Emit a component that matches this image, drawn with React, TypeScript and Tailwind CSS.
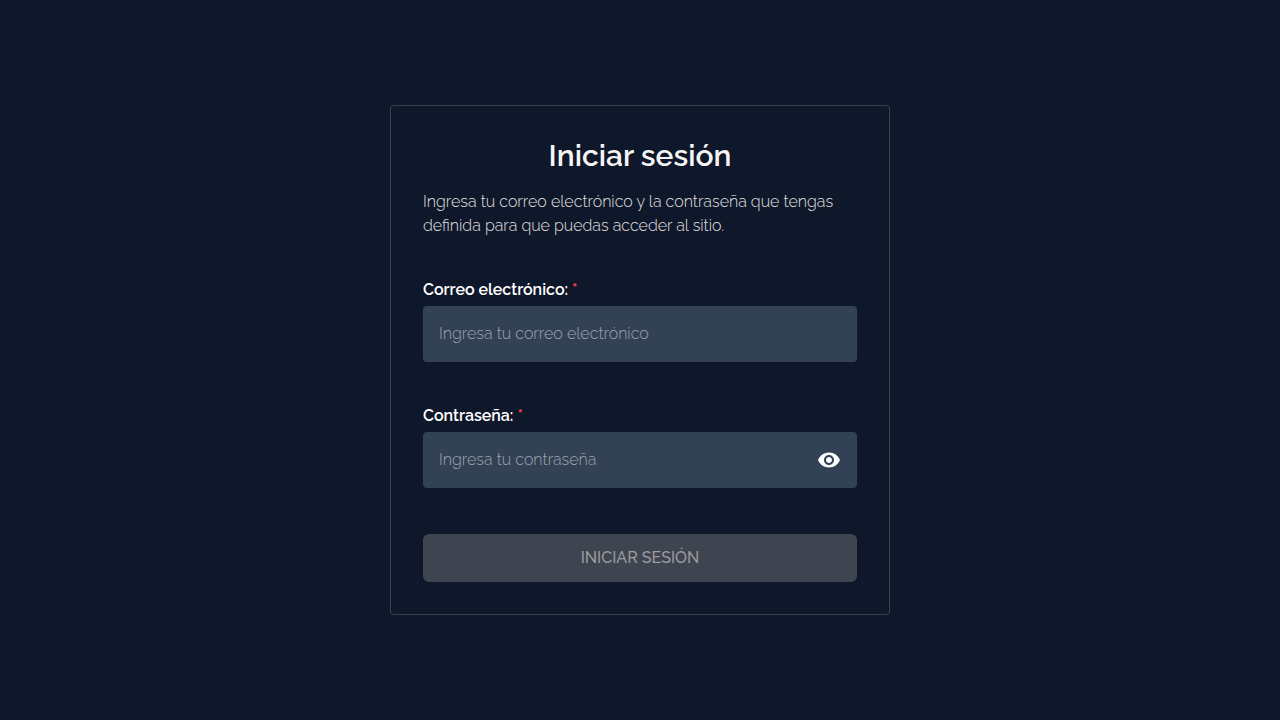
import { useState } from "react";
import { MdVisibility } from "react-icons/md";

const fieldClass =
  "block h-14 w-full rounded bg-[#334155] px-4 pb-0.5 text-base font-light text-white outline-none placeholder:text-[#9ca3af]";

function Label({ htmlFor, children }: { htmlFor: string; children: string }) {
  return (
    <label htmlFor={htmlFor} className="mb-1 block text-base font-semibold text-white">
      {children} <span className="text-[#ef4444]">*</span>
    </label>
  );
}

export default function App() {
  const [visible, setVisible] = useState(false);
  return (
    <main className="flex min-h-screen items-center justify-center bg-[#0f172a] font-['Raleway','Open_Sans',sans-serif]">
      <form
        className="w-full max-w-[500px] rounded border border-[#374151] p-8"
        onSubmit={(e) => e.preventDefault()}
      >
        <h1 className="text-center text-3xl font-semibold text-[#f5f5f5]">Iniciar sesión</h1>
        <p className="mt-4 text-base font-light text-[#e0e0e0]">
          Ingresa tu correo electrónico y la contraseña que tengas definida para que puedas acceder al sitio.
        </p>
        <div className="mt-10">
          <Label htmlFor="email">Correo electrónico:</Label>
          <input id="email" type="email" placeholder="Ingresa tu correo electrónico" className={fieldClass} />
        </div>
        <div className="mt-[42px]">
          <Label htmlFor="password">Contraseña:</Label>
          <div className="relative">
            <input
              id="password"
              type={visible ? "text" : "password"}
              placeholder="Ingresa tu contraseña"
              className={fieldClass}
            />
            <button
              type="button"
              aria-label="Mostrar contraseña"
              onClick={() => setVisible(!visible)}
              className="absolute inset-y-0 right-4 text-white"
            >
              <MdVisibility className="size-6" />
            </button>
          </div>
        </div>
        <button disabled className="mt-[46px] h-12 w-full rounded-md bg-[#3f4451] font-medium text-[#9c9c9c]">
          INICIAR SESIÓN
        </button>
      </form>
    </main>
  );
}
